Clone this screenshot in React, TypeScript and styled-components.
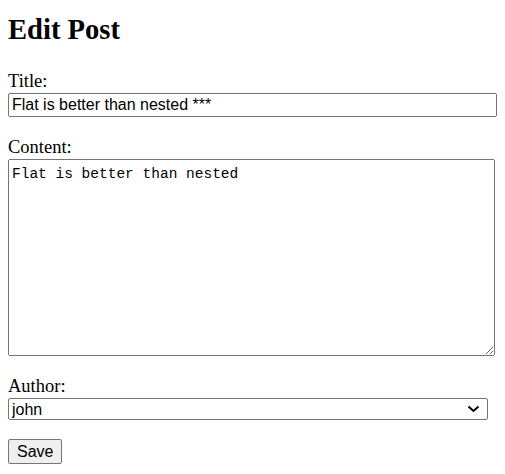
import React from "react";
import styled, { createGlobalStyle } from "styled-components";

const Global = createGlobalStyle`
  html, body { margin: 0; padding: 0; background: #fff; }
  body { font-family: "Liberation Serif", "Times New Roman", serif; font-size: 16px; color: #000; }
`;

const Page = styled.div`
  padding: 14px 8px 8px;
`;

const Heading = styled.h1`
  margin: 0 0 25px;
  font-size: 28.6px;
  font-weight: bold;
  line-height: normal;
`;

const Form = styled.form`
  display: flex;
  flex-direction: column;
`;

const Field = styled.div<{ $gap: number }>`
  display: flex;
  flex-direction: column;
  align-items: flex-start;
  margin-bottom: ${(p) => p.$gap}px;
`;

const Label = styled.label`
  display: block;
  font-size: 18.5px;
  line-height: normal;
  margin-bottom: 1px;
`;

const TextInput = styled.input`
  box-sizing: border-box;
  width: 489px;
  height: 24px;
  font-family: "Liberation Sans", Arial, sans-serif;
  font-size: 16px;
  margin: 0;
`;

const TextArea = styled.textarea`
  box-sizing: border-box;
  width: 487px;
  height: 197px;
  padding: 6px 3px 2px;
  font-family: "Liberation Mono", "DejaVu Sans Mono", monospace;
  font-size: 14.5px;
  margin: 0;
`;

const SelectWrap = styled.div`
  position: relative;
  width: 480px;
  height: 22px;
`;

const Select = styled.select`
  appearance: none;
  box-sizing: border-box;
  width: 100%;
  height: 22px;
  padding: 0 24px 0 3px;
  border: 1px solid #767676;
  border-radius: 2px;
  background: #fff;
  color: #000;
  font-family: "Liberation Sans", Arial, sans-serif;
  font-size: 16px;
  margin: 0;
`;

const Chevron = styled.svg`
  position: absolute;
  right: 8px;
  top: 7px;
  width: 13px;
  height: 8px;
  pointer-events: none;
`;

const Button = styled.button`
  align-self: flex-start;
  box-sizing: border-box;
  height: 25px;
  font-family: "Liberation Sans", Arial, sans-serif;
  font-size: 16px;
  padding: 1px 8px;
  margin: 0;
  background: #efefef;
  border: 1px solid #767676;
  border-radius: 2px;
  color: #000;
`;

export default function App() {
  return (
    <>
      <Global />
      <Page>
        <Heading>Edit Post</Heading>
        <Form onSubmit={(e) => e.preventDefault()}>
          <Field $gap={20}>
            <Label htmlFor="title">Title:</Label>
            <TextInput id="title" type="text" defaultValue="Flat is better than nested ***" />
          </Field>
          <Field $gap={20}>
            <Label htmlFor="content">Content:</Label>
            <TextArea id="content" defaultValue="Flat is better than nested" />
          </Field>
          <Field $gap={19}>
            <Label htmlFor="author">Author:</Label>
            <SelectWrap>
              <Select id="author" defaultValue="john">
                <option value="john">john</option>
                <option value="jane">jane</option>
              </Select>
              <Chevron viewBox="0 0 13 8" aria-hidden="true">
                <path d="M1.5 1.5 L6.5 6 L11.5 1.5" fill="none" stroke="#000" strokeWidth="2" />
              </Chevron>
            </SelectWrap>
          </Field>
          <Button type="submit">Save</Button>
        </Form>
      </Page>
    </>
  );
}
